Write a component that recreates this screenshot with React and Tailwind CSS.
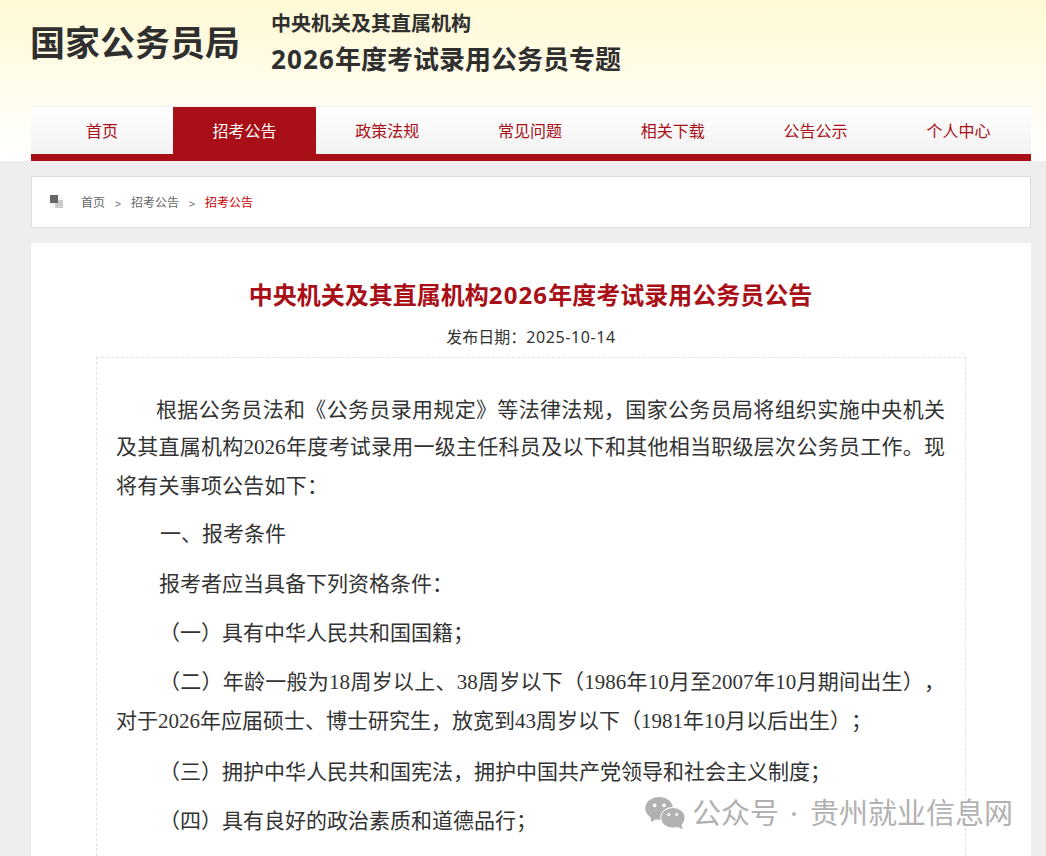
import React from "react";

const navItems = [
  "首页",
  "招考公告",
  "政策法规",
  "常见问题",
  "相关下载",
  "公告公示",
  "个人中心",
];

// width is the set measure of each line, characters are spread to fill it
const paragraphs = [
  {
    className: "pt-[33px]",
    lines: [
      { text: "根据公务员法和《公务员录用规定》等法律法规，国家公务员局将组织实施中央机关", className: "ml-10 w-[789px] h-[37px]" },
      { text: "及其直属机构2026年度考试录用一级主任科员及以下和其他相当职级层次公务员工作。现", className: "w-[829px] h-[39px]" },
      { text: "将有关事项公告如下：", className: "w-[212px] h-[38px]" },
    ],
  },
  { className: "mt-2.5", lines: [{ text: "一、报考条件", className: "ml-11 w-[126px] h-[38px]" }] },
  { className: "mt-3", lines: [{ text: "报考者应当具备下列资格条件：", className: "ml-[43px] w-[294px] h-[38px]" }] },
  { className: "mt-[11px]", lines: [{ text: "（一）具有中华人民共和国国籍；", className: "ml-[43px] w-[315px] h-[38px]" }] },
  {
    className: "mt-[11px]",
    lines: [
      { text: "（二）年龄一般为18周岁以上、38周岁以下（1986年10月至2007年10月期间出生），", className: "ml-[43px] w-[786px] h-[39px]" },
      { text: "对于2026年应届硕士、博士研究生，放宽到43周岁以下（1981年10月以后出生）；", className: "w-[751px] h-[39px]" },
    ],
  },
  { className: "mt-3", lines: [{ text: "（三）拥护中华人民共和国宪法，拥护中国共产党领导和社会主义制度；", className: "ml-[43px] w-[672px] h-[38px]" }] },
  { className: "mt-[11px]", lines: [{ text: "（四）具有良好的政治素质和道德品行；", className: "ml-[43px] w-[378px] h-[38px]" }] },
];

const Header = () => (
  <header className="h-[161px] bg-gradient-to-b from-[#fff9d5] to-white px-[31px]">
    <div className="flex h-[106px] text-[#2f2f2f] font-bold whitespace-nowrap">
      <h1 className="-ml-px w-[241px] pt-[17px] text-[35px] leading-[52px]">国家公务员局</h1>
      <div className="pt-[9px]">
        <div className="text-[20px] leading-[30px]">中央机关及其直属机构</div>
        <div className="text-[26px] leading-10">
          <span className="tracking-[1.1px]">2026</span>年度考试录用公务员专题
        </div>
      </div>
    </div>
    <nav className="grid h-[55px] w-[1000px] grid-cols-[142px_repeat(6,142.8px)] border-t border-[#f0f0f0] border-b-[7px] border-b-[#a90f16] bg-gradient-to-b from-white to-[#f2f2f2]">
      {navItems.map((item, index) => (
        <a
          key={item}
          className={`text-center text-base leading-[48px] ${
            index === 1 ? "bg-[#a90f16] text-white" : "text-[#a90f16]"
          }`}
        >
          {item}
        </a>
      ))}
    </nav>
  </header>
);

const Breadcrumb = () => (
  <div className="mt-[15px] flex h-[52px] w-[1000px] items-center border border-[#ddd] bg-white pl-[18px] text-xs text-[#666]">
    <svg width="13" height="13" viewBox="0 0 13 13" className="mr-[18px] mb-0.5" shapeRendering="crispEdges">
      <rect width="13" height="13" fill="#f5f5f5" />
      <rect x="5" y="5" width="8" height="8" fill="#ccc" />
      <rect width="8" height="8" fill="#666" />
    </svg>
    <div className="flex items-center pt-0.5">
      <span className="w-[34px]">首页</span>
      <span className="w-4 pt-0.5 text-[11px]">&gt;</span>
      <span className="w-[58px]">招考公告</span>
      <span className="w-4 pt-0.5 text-[11px]">&gt;</span>
      <span className="text-[#cc0000]">招考公告</span>
    </div>
  </div>
);

const Article = () => (
  <main className="mt-[15px] h-[613px] w-[1000px] bg-white px-[65px] pt-[34px]">
    <h2 className="pr-px text-center text-2xl leading-9 font-bold text-[#a90f16]">
      中央机关及其直属机构<span className="tracking-[1.1px]">2026</span>年度考试录用公务员公告
    </h2>
    <div className="mt-3 text-center text-base leading-6 text-[#333]">
      发布日期：<span className="tracking-[0.6px]">2025-10-14</span>
    </div>
    <div className="mt-2 h-[499px] border border-b-0 border-dashed border-[#e2e2e2] pl-[19px] font-['Liberation_Serif','Noto_Sans_CJK_SC',serif] text-[21px] leading-[38px] text-[#333]">
      {paragraphs.map((p, index) => (
        <div key={index} className={p.className}>
          {p.lines.map((line) => (
            <div
              key={line.text}
              className={`whitespace-nowrap [text-align-last:justify] [text-spacing-trim:space-all] ${line.className}`}
            >
              {line.text}
            </div>
          ))}
        </div>
      ))}
    </div>
  </main>
);

const WechatIcon = () => (
  <svg width="40" height="34" viewBox="0 0 40 34" fill="currentColor">
    <path d="M5 19 L6.4 26 L13 22 Z" />
    <ellipse cx="14.1" cy="12.3" rx="13.8" ry="11.4" />
    <ellipse cx="27.9" cy="21.8" rx="12.7" ry="10.7" fill="#fff" />
    <ellipse cx="27.9" cy="21.8" rx="11.7" ry="9.8" />
    <path d="M30 30 L37.6 33.2 L36.2 27 Z" />
    <g fill="#fff">
      <circle cx="9.7" cy="9.4" r="1.8" />
      <circle cx="19" cy="9.4" r="1.8" />
      <circle cx="23.8" cy="18.6" r="1.5" />
      <circle cx="31.7" cy="18.6" r="1.5" />
    </g>
  </svg>
);

const Watermark = () => (
  <div className="absolute top-[793px] left-[645px] flex h-10 items-center text-[29px] leading-10 whitespace-nowrap text-[#666] opacity-50">
    <WechatIcon />
    <span className="ml-[7px] w-[98px]">公众号</span>
    <span className="w-5">·</span>
    <span>贵州就业信息网</span>
  </div>
);

const App = () => {
  return (
    <div className="relative h-[856px] w-[1046px] overflow-hidden bg-[#eee] font-['Noto_Sans','Noto_Sans_CJK_SC',sans-serif]">
      <Header />
      <div className="px-[31px]">
        <Breadcrumb />
        <Article />
      </div>
      <Watermark />
    </div>
  );
};

export default App;
